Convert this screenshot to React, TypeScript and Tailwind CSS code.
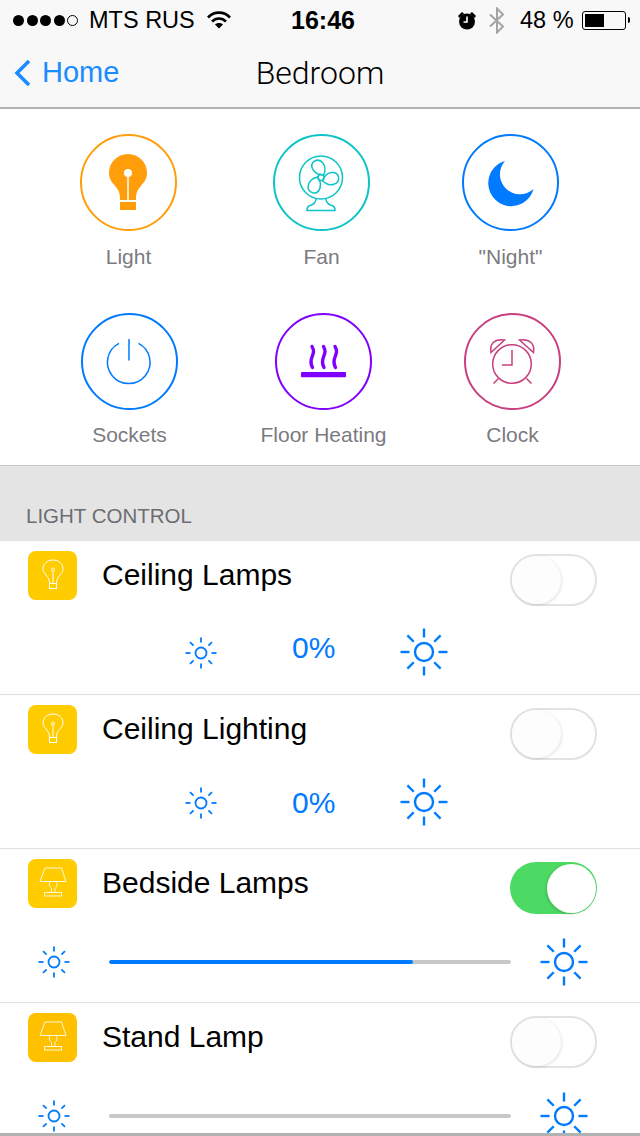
import React from "react";

const SANS = "font-['Liberation_Sans',Arial,sans-serif]";

function Sun({ size }: { size: "sm" | "lg" }) {
  const big = size === "lg";
  const px = big ? 48 : 32;
  const c = px / 2;
  const r = big ? 9 : 5.5;
  const a = big ? 14.5 : 10.5;
  const b = big ? 23.5 : 15.5;
  const d = Math.SQRT1_2;
  const rays = [
    [1, 0], [-1, 0], [0, 1], [0, -1], [d, d], [-d, d], [d, -d], [-d, -d],
  ];
  return (
    <svg width={px} height={px} viewBox={`0 0 ${px} ${px}`} className="shrink-0" fill="none" stroke="#007aff" strokeWidth={big ? 2.4 : 1.8}>
      <circle cx={c} cy={c} r={r} />
      {rays.map(([x, y], i) => (
        <line key={i} x1={c + x * a} y1={c + y * a} x2={c + x * b} y2={c + y * b} />
      ))}
    </svg>
  );
}

function Toggle({ on }: { on: boolean }) {
  if (on) {
    return (
      <div className="w-[87px] h-[52px] rounded-full bg-[#4cd964] flex justify-end items-center pr-[1px] shrink-0">
        <div className="w-[49px] h-[49px] rounded-full bg-white shadow-[-1px_1px_3px_rgba(0,0,0,0.16)]" />
      </div>
    );
  }
  return (
    <div className="w-[87px] h-[52px] rounded-full border-2 border-[#e2e2e2] bg-white flex items-center shrink-0">
      <div className="w-[49px] h-[48px] rounded-full bg-[#fdfdfd] shadow-[1px_1px_3px_rgba(0,0,0,0.11)]" />
    </div>
  );
}

function BulbTile() {
  return (
    <svg width="49" height="49" viewBox="0 0 49 49" fill="none" stroke="#fff" strokeWidth="1">
      <path d="M21.5 32.5 C21.5 28 20 26.5 18 24 C16 21.5 15 20 15 18 C15 12.5 19.5 9 25 9 C30.5 9 35 12.5 35 18 C35 20 34 21.5 32 24 C30 26.5 28.5 28 28.5 32.5 Z" />
      <rect x="21.5" y="32.5" width="7" height="5" />
      <circle cx="25" cy="18.5" r="1.5" />
      <line x1="25" y1="20" x2="25" y2="32.5" />
    </svg>
  );
}

function LampTile() {
  return (
    <svg width="49" height="49" viewBox="0 0 49 49" fill="none" stroke="#fff" strokeOpacity="0.85" strokeWidth="1">
      <path d="M17 9 H33.5 L38 22.5 H12 Z" />
      <path d="M22 22.5 C20.5 26 22 28 23.5 29.5 L23.5 33.5 H27 L27 29.5 C28.5 28 30 26 28 22.5" />
      <rect x="16.5" y="33.5" width="17" height="3.5" />
    </svg>
  );
}

function Row({
  title,
  tile,
  lamp,
  on,
  slider,
  gapClass,
  percentClass,
  last,
}: {
  title: string;
  tile: string;
  lamp?: boolean;
  on?: boolean;
  slider?: number;
  gapClass: string;
  percentClass?: string;
  last?: boolean;
}) {
  return (
    <div className={`bg-white shrink-0 ${last ? "h-[130px] overflow-hidden" : "h-[154px] border-b border-[#e0e0e0]"}`}>
      <div className="h-[76px] flex items-start pt-[10px] pl-[28px] pr-[43px]">
        <div className={`w-[49px] h-[49px] rounded-[8px] shrink-0 ${tile}`}>{lamp ? <LampTile /> : <BulbTile />}</div>
        <div className="ml-[25px] text-[30px] leading-[46px] text-black mt-[1px]">{title}</div>
        <div className="ml-auto mt-[3px]">
          <Toggle on={!!on} />
        </div>
      </div>
      {slider === undefined ? (
        <div className={`flex items-center pl-[185px] ${gapClass}`}>
          <Sun size="sm" />
          <div className={`ml-[75px] w-[44px] text-[30px] leading-[46px] text-[#007aff] whitespace-nowrap ${percentClass ?? ""}`}>0%</div>
          <div className="ml-[64px] -mt-[1px] mb-[1px]">
            <Sun size="lg" />
          </div>
        </div>
      ) : (
        <div className={`flex items-center pl-[38px] ${gapClass}`}>
          <Sun size="sm" />
          <div className="ml-[39px] w-[402px] h-[4px] rounded-full bg-[#c8c8c8] overflow-hidden">
            <div className="h-full bg-[#007aff] rounded-full" style={{ width: `${slider}%` }} />
          </div>
          <div className="ml-[29px]">
            <Sun size="lg" />
          </div>
        </div>
      )}
    </div>
  );
}

function Action({
  color,
  label,
  icon,
  labelClass,
}: {
  color: string;
  label: string;
  icon: React.ReactNode;
  labelClass: string;
}) {
  return (
    <div className="w-[97px] flex flex-col items-center shrink-0">
      <div className={`w-[97px] h-[97px] rounded-full border-2 ${color} shrink-0`}>
        <svg width="93" height="93" viewBox="2 2 93 93" fill="none">
          {icon}
        </svg>
      </div>
      <div className={`text-[21px] leading-[30px] text-[#7b7b7f] whitespace-nowrap ${labelClass}`}>{label}</div>
    </div>
  );
}

const blade = "M0 -3 C-6.5 -5 -10 -14 -4 -17 C3 -20 9 -11 3 -2 Z";

export default function App() {
  return (
    <div className={`w-[640px] h-[1136px] overflow-hidden flex flex-col bg-white ${SANS}`}>
      {/* Status bar */}
      <div className="h-[40px] bg-[#f8f8f8] flex items-center pl-[13px] text-black shrink-0">
        <div className="flex items-center gap-[2.5px] w-[67px] shrink-0">
          {[0, 1, 2, 3].map((i) => (
            <div key={i} className="w-[11px] h-[11px] rounded-full bg-black" />
          ))}
          <div className="w-[11px] h-[11px] rounded-full border border-black" />
        </div>
        <div className="ml-[9px] w-[105px] text-[23.5px] leading-[40px] whitespace-nowrap shrink-0">MTS RUS</div>
        <svg className="ml-[13px] shrink-0" width="24" height="18" viewBox="0 0 24 18" fill="none" stroke="#000" strokeWidth="2.6">
          <path d="M1 6.5 C7 0 17 0 23 6.5" />
          <path d="M5 10.5 C9 6.5 15 6.5 19 10.5" />
          <path d="M12 17.5 L8 13.5 C10 11.5 14 11.5 16 13.5 Z" fill="#000" stroke="none" />
        </svg>
        <div className="ml-[60px] w-[65px] text-[25px] font-bold leading-[40px] whitespace-nowrap shrink-0">16:46</div>
        <svg className="ml-[101px] shrink-0" width="20" height="19" viewBox="0 0 20 19">
          <circle cx="10" cy="10.5" r="8" fill="#000" />
          <path d="M1 5 L5 1 L7 2.5 L2.5 7 Z M19 5 L15 1 L13 2.5 L17.5 7 Z" fill="#000" />
          <path d="M10 5.5 V11 H6.5" fill="none" stroke="#fff" strokeWidth="1.6" />
        </svg>
        <svg className="ml-[12px] shrink-0" width="16" height="27" viewBox="0 0 16 27" fill="none" stroke="#a3a3a3" strokeWidth="2">
          <path d="M1 7.5 L14 19.5 L8 25.5 V1.5 L14 7.5 L1 19.5" />
        </svg>
        <div className="ml-[15px] w-[54px] text-[23.5px] leading-[40px] whitespace-nowrap shrink-0">48 %</div>
        <div className="ml-[8px] w-[44px] h-[19px] rounded-[3px] border border-black p-[2px] shrink-0">
          <div className="w-[19px] h-full bg-black" />
        </div>
        <div className="ml-[2px] w-[2px] h-[6px] bg-black rounded-r-full shrink-0" />
      </div>

      {/* Nav bar */}
      <div className="h-[69px] bg-[#f8f8f8] border-b-2 border-[#b2b2b2] flex items-center relative shrink-0">
        <svg className="ml-[13px] -mt-[2px] shrink-0" width="18" height="28" viewBox="0 0 18 28" fill="none" stroke="#1a8cff" strokeWidth="3.6">
          <path d="M16 2 L4 14 L16 26" />
        </svg>
        <div className="ml-[11px] text-[29px] leading-[40px] text-[#1a8cff] -mt-[4px]">Home</div>
        <div className="absolute left-0 right-0 top-[13px] text-center text-[32px] leading-[40px] text-black font-['Roboto',sans-serif] font-light">
          Bedroom
        </div>
      </div>

      {/* Actions */}
      <div className="h-[357px] bg-white border-b border-[#c8c8c8] shrink-0 pt-[25px]">
        <div className="flex pl-[80px] h-[179px]">
          <Action
            color="border-[#ff9d0a]"
            label="Light"
            labelClass="mt-[11px]"
            icon={
              <>
                <path d="M48 20 C37.5 20 29 28.5 29 39 C29 46 33 49 36 53 C39 57 40 59 40 66 H56 C56 59 57 57 60 53 C63 49 67 46 67 39 C67 28.5 58.5 20 48 20 Z" fill="#ff9d0a" />
                <rect x="40" y="68" width="16" height="8" fill="#ff9d0a" />
                <circle cx="48" cy="39" r="4" fill="#fff" />
                <line x1="48" y1="39" x2="48" y2="66" stroke="#fff" strokeWidth="1.5" />
              </>
            }
          />
          <div className="ml-[96px]">
            <Action
              color="border-[#0cc4c8]"
              label="Fan"
              labelClass="mt-[11px]"
              icon={
                <g stroke="#0cc4c8" strokeWidth="1.5">
                  <circle cx="48" cy="43.5" r="21.5" />
                  <circle cx="48" cy="43.5" r="3" />
                  <path d={blade} transform="translate(48 43.5) rotate(-10)" />
                  <path d={blade} transform="translate(48 43.5) rotate(100)" />
                  <path d={blade} transform="translate(48 43.5) rotate(222)" />
                  <path d="M43 65 C43 70 39 71 36 72 C34 73 34 75 34 76.5 H62 C62 75 62 73 60 72 C57 71 53 70 53 65" />
                </g>
              }
            />
          </div>
          <div className="ml-[92px]">
            <Action
              color="border-[#007aff]"
              label={'"Night"'}
              labelClass="mt-[11px]"
              icon={<path d="M43 27 A20 20 0 0 0 71.5 55 A23 23 0 1 1 43 27 Z" fill="#007aff" />}
            />
          </div>
        </div>
        <div className="flex pl-[81px]">
          <Action
            color="border-[#007aff]"
            label="Sockets"
            labelClass="mt-[10px]"
            icon={
              <g stroke="#007aff" strokeWidth="1.5">
                <path d="M38 30.3 A21.3 21.3 0 1 0 57.5 30.3" />
                <line x1="48" y1="26" x2="48" y2="47.5" />
              </g>
            }
          />
          <div className="ml-[97px]">
            <Action
              color="border-[#8000ff]"
              label="Floor Heating"
              labelClass="mt-[10px]"
              icon={
                <g>
                  <rect x="26" y="59" width="45" height="5.3" rx="1" fill="#8000ff" />
                  <g stroke="#8000ff" strokeWidth="3.4" strokeLinecap="round">
                    <path d="M37 33.5 C39.5 38 38.5 40 37 44 C35.5 48 35.5 51 37.5 54.5" fill="none" />
                    <path d="M48.5 33.5 C51 38 50 40 48.5 44 C47 48 47 51 49 54.5" fill="none" />
                    <path d="M60 33.5 C62.5 38 61.5 40 60 44 C58.5 48 58.5 51 60.5 54.5" fill="none" />
                  </g>
                </g>
              }
            />
          </div>
          <div className="ml-[92px]">
            <Action
              color="border-[#c8407f]"
              label="Clock"
              labelClass="mt-[10px]"
              icon={
                <g stroke="#c8407f" strokeWidth="1.5">
                  <circle cx="48" cy="51" r="19.3" />
                  <path d="M48 37 V52 H38" />
                  <path d="M27 39.5 C25.5 31 30 25.5 40.5 27 Z" />
                  <path d="M69.5 39.5 C71 31 66 25.5 55.5 27 Z" />
                  <path d="M34.5 65.5 L29.5 70.5 M62.5 65.5 L67.5 70.5" />
                </g>
              }
            />
          </div>
        </div>
      </div>

      {/* Section header */}
      <div className="h-[75px] bg-[#e4e4e4] shrink-0 flex items-end pl-[26px] pb-[11px]">
        <div className="text-[20.5px] leading-[28px] text-[#6d6d72]">LIGHT CONTROL</div>
      </div>

      {/* List */}
      <div className="flex-1 min-h-0 overflow-hidden flex flex-col">
        <Row title="Ceiling Lamps" tile="bg-[#ffcc00]" gapClass="mt-[12px]" percentClass="-mt-[5px] mb-[5px]" />
        <Row title="Ceiling Lighting" tile="bg-[#ffcc00]" gapClass="mt-[8px]" />
        <Row title="Bedside Lamps" tile="bg-[#ffcc00]" lamp on slider={75.5} gapClass="mt-[13px]" />
        <Row title="Stand Lamp" tile="bg-[#ffc000]" lamp slider={0} gapClass="mt-[13px]" last />
      </div>
      <div className="h-[3px] bg-[#b2b2b2] shrink-0" />
    </div>
  );
}
